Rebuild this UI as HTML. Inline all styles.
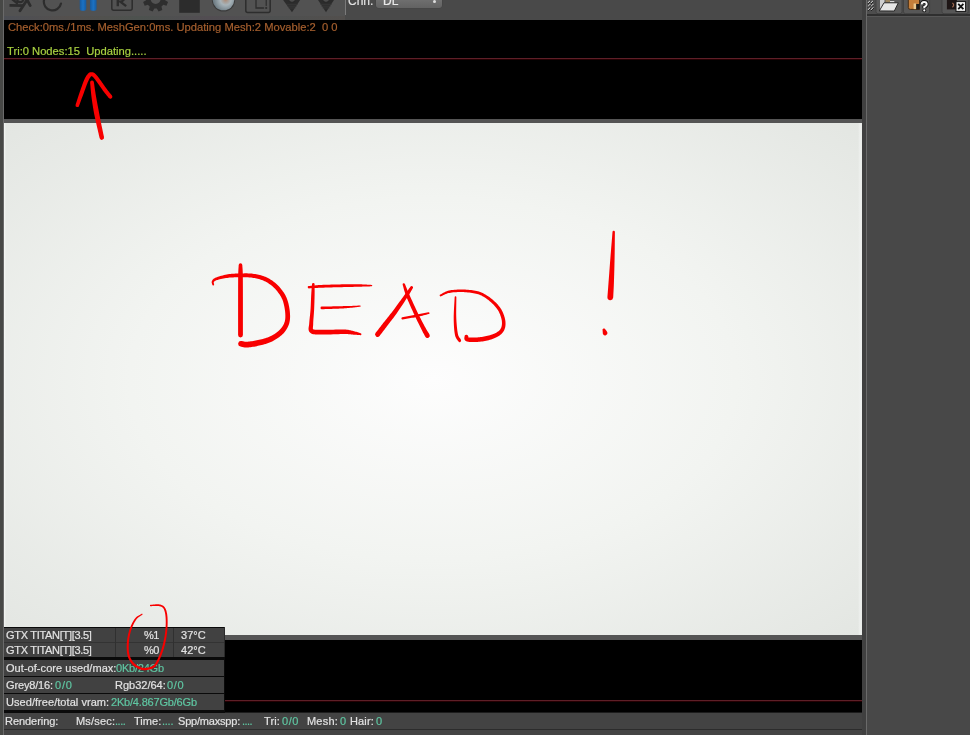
<!DOCTYPE html>
<html><head><meta charset="utf-8">
<style>
html,body{margin:0;padding:0;width:970px;height:735px;overflow:hidden;background:#4b4b4b;}
*{box-sizing:border-box;}
.a{position:absolute;}
body{font-family:"Liberation Sans",sans-serif;font-size:11px;position:relative;}
.t{position:absolute;white-space:pre;line-height:13px;font-family:"Liberation Sans",sans-serif;font-size:11px;will-change:transform;-webkit-text-stroke:0.2px currentColor;}
.g{color:#67cca6;}
</style></head><body>
<!-- left strip -->
<div class="a" style="left:0;top:0;width:4px;height:735px;background:#474846"></div>
<div class="a" style="left:3px;top:0;width:1px;height:735px;background:#6a6a6a"></div>
<!-- top toolbar -->
<div class="a" style="left:4px;top:0;width:858px;height:20px;background:#494949"></div>
<div class="a" style="left:4px;top:0;width:341px;height:20px;background:#525252"></div>
<div class="a" style="left:4px;top:16px;width:341px;height:4px;background:linear-gradient(90deg,#4d4f55,#54504d 20%,#4d524f 40%,#524d52 60%,#4e5050 80%,#524f4d)"></div>

<svg class="a" style="left:0;top:0" width="345" height="20" viewBox="0 0 345 20">
  <g fill="none" stroke="#2d2d2d" stroke-linecap="round">
    <path d="M9.5 5.3 L24 5.6" stroke-width="2.8" stroke-linecap="butt"/>
    <path d="M20 10.8 L27.3 -0.5" stroke-width="2.8"/>
    <path d="M12 -1 L17 3" stroke-width="2.4"/>
    <circle cx="20.2" cy="-1" r="3.2" stroke-width="2.2"/>
    <path d="M27.8 1.2 L30.2 5.6" stroke-width="2.8"/>
    <path d="M44 0 A8.5 8.5 0 0 0 61 3.5" stroke-width="2.2"/>
    <rect x="111.8" y="-4" width="20.4" height="14.2" rx="2" stroke-width="1.5"/>
    <rect x="245.8" y="-4" width="24.4" height="16.4" rx="2" stroke-width="1.5"/>
    <path d="M256 -1 V8 H263.6" stroke-width="1.3"/>
    <path d="M266.2 -1 V5.6" stroke-width="1.2"/>
  </g>
  <defs>
    <linearGradient id="pb" x1="0" x2="1"><stop offset="0" stop-color="#175a9e"/><stop offset=".5" stop-color="#1b72c4"/><stop offset="1" stop-color="#175a9e"/></linearGradient>
    <radialGradient id="sph" cx=".6" cy=".52" r=".55" fx=".6" fy=".5"><stop offset="0" stop-color="#b08670"/><stop offset=".18" stop-color="#a89a90"/><stop offset=".45" stop-color="#a7b3b9"/><stop offset="1" stop-color="#6f7d85"/></radialGradient>
  </defs>
  <rect x="79.7" y="-3" width="6.6" height="13.8" rx="2" fill="url(#pb)"/>
  <rect x="90" y="-3" width="6.6" height="13.8" rx="2" fill="url(#pb)"/>
  <path d="M117.8 -2 V6.2" stroke="#2d2d2d" stroke-width="2.4" fill="none"/><path d="M120.5 1.8 L126.2 6.2" stroke="#2d2d2d" stroke-width="2.3" fill="none"/><path d="M118 1.5 Q124 2 124.5 -2" stroke="#2d2d2d" stroke-width="2" fill="none"/>
  <path d="M165.20 -1.00 L165.12 0.25 L168.05 1.99 L166.51 5.69 L163.22 4.84 L162.39 5.79 L161.44 6.62 L162.29 9.91 L158.59 11.45 L156.85 8.52 L155.60 8.60 L154.35 8.52 L152.61 11.45 L148.91 9.91 L149.76 6.62 L148.81 5.79 L147.98 4.84 L144.69 5.69 L143.15 1.99 L146.08 0.25 L146.00 -1.00 L146.08 -2.25 L143.15 -3.99 L144.69 -7.69 L147.98 -6.84 L148.81 -7.79 L149.76 -8.62 L148.91 -11.91 L152.61 -13.45 L154.35 -10.52 L155.60 -10.60 L156.85 -10.52 L158.59 -13.45 L162.29 -11.91 L161.44 -8.62 L162.39 -7.79 L163.22 -6.84 L166.51 -7.69 L168.05 -3.99 L165.12 -2.25 Z M160.60 -1.00 A5 5 0 1 0 150.60 -1.00 A5 5 0 1 0 160.60 -1.00 Z" fill="#2e2e2e" fill-rule="evenodd"/>
  <rect x="179.2" y="0" width="20.6" height="12.8" fill="#2c2c2c"/>
  <circle cx="223.5" cy="0" r="11.6" fill="#3a3a3a"/><circle cx="266.2" cy="8" r="1.1" fill="#2d2d2d"/>
  <circle cx="223.5" cy="-0.5" r="10.8" fill="url(#sph)"/>
  <path d="M282.4 -1 L292 12.2 L300.8 -1 Z" fill="#2c2c2c"/>
  <circle cx="292" cy="-1.2" r="3.6" fill="#4c4c4c" stroke="#262626" stroke-width="1"/>
  <path d="M286 4.3 H298 M287.2 6.2 H296.8 M288.5 8 H295.5" stroke="#3c3c3c" stroke-width="0.7"/>
  <path d="M317.4 -1 L326 12.2 L334.6 -1 Z" fill="#2c2c2c"/>
  <circle cx="326" cy="-1.2" r="3.6" fill="#4c4c4c" stroke="#262626" stroke-width="1"/>
  <path d="M320 4.3 H332 M321.2 6.2 H330.8 M322.5 8 H329.5" stroke="#3c3c3c" stroke-width="0.7"/>
</svg>
<div class="a" style="left:345px;top:0;width:1px;height:15px;background:#7a7a7a"></div>
<div class="t" style="left:348px;top:-5.5px;color:#e0e0e0;font-size:12px">Chn:</div>
<div class="a" style="left:376px;top:-7px;width:66px;height:14.5px;background:linear-gradient(#7a7a7a,#626262);border-radius:3px;box-shadow:0 0 0 0.6px #444"></div>
<div class="t" style="left:383px;top:-5.5px;color:#e8e8e8;font-size:12px">DL</div>
<div class="a" style="left:433px;top:0px;width:3px;height:3px;background:#ddd;border-radius:50%"></div>

<!-- top black panel -->
<div class="a" style="left:4px;top:20px;width:858px;height:99px;background:#000"></div>
<div class="a" style="left:4px;top:58px;width:858px;height:1px;background:#5e1f28"></div><div class="a" style="left:4px;top:59px;width:858px;height:1px;background:#240002"></div>
<div class="t" style="left:8px;top:21px;color:#a55f2e;font-size:11.2px">Check:0ms./1ms. MeshGen:0ms. Updating Mesh:2 Movable:2  0 0</div>
<div class="t" style="left:7px;top:45px;color:#a8d040;font-size:11.2px">Tri:0 Nodes:15  Updating.....</div>
<!-- gray strip -->
<div class="a" style="left:4px;top:119px;width:858px;height:4px;background:#545454"></div>
<!-- viewport -->
<div class="a" style="left:4px;top:123px;width:858px;height:512px;background:radial-gradient(ellipse at 50% 50%,#fdfdfd 0%,#f2f4f1 50%,#e3e6e2 100%)"></div>
<div class="a" style="left:4px;top:123px;width:2px;height:504px;background:linear-gradient(90deg,rgba(250,252,250,.7),rgba(250,252,250,0))"></div>
<div class="a" style="left:858px;top:123px;width:4px;height:512px;background:linear-gradient(90deg,rgba(240,242,240,0),rgba(240,242,240,.8) 50%,rgba(240,242,240,.4))"></div>
<!-- gray strip bottom -->
<div class="a" style="left:4px;top:635px;width:858px;height:5px;background:#555"></div>
<!-- bottom black panel -->
<div class="a" style="left:4px;top:640px;width:858px;height:72px;background:#000"></div>
<div class="a" style="left:4px;top:700px;width:858px;height:1px;background:#5e1f28"></div><div class="a" style="left:4px;top:701px;width:858px;height:1px;background:#240002"></div>
<!-- status bar -->
<div class="a" style="left:4px;top:712px;width:858px;height:1px;background:#1c1c1c"></div>
<div class="a" style="left:4px;top:713px;width:858px;height:16px;background:#434343"></div>
<div class="a" style="left:4px;top:729px;width:858px;height:1px;background:#2c2c2c"></div>
<div class="a" style="left:4px;top:730px;width:858px;height:5px;background:#444"></div>
<div class="t" style="left:5px;top:715px;color:#e2e2e2;letter-spacing:-0.05px">Rendering:</div>
<div class="t" style="left:75.5px;top:715px;color:#e2e2e2;letter-spacing:0.18px">Ms/sec:</div>
<div class="t" style="left:114.9px;top:715px;color:#5fc6a2;letter-spacing:-0.45px">....</div>
<div class="t" style="left:134.2px;top:715px;color:#e2e2e2;letter-spacing:0.05px">Time:</div>
<div class="t" style="left:162.3px;top:715px;color:#5fc6a2;letter-spacing:-0.25px">....</div>
<div class="t" style="left:177.5px;top:715px;color:#e2e2e2;letter-spacing:-0.2px">Spp/maxspp:</div>
<div class="t" style="left:241.7px;top:715px;color:#5fc6a2;letter-spacing:-0.55px">....</div>
<div class="t" style="left:264.4px;top:715px;color:#e2e2e2;letter-spacing:0.15px">Tri:</div>
<div class="t" style="left:282px;top:715px;color:#5fc6a2;letter-spacing:0.6px">0/0</div>
<div class="t" style="left:306.7px;top:715px;color:#e2e2e2;letter-spacing:0.2px">Mesh:</div>
<div class="t" style="left:339.7px;top:715px;color:#5fc6a2;letter-spacing:0px">0</div>
<div class="t" style="left:350px;top:715px;color:#e2e2e2;letter-spacing:0.15px">Hair:</div>
<div class="t" style="left:375.8px;top:715px;color:#5fc6a2;letter-spacing:0px">0</div>

<!-- gpu table -->
<div class="a" style="left:4px;top:627px;width:221px;height:86px;background:#0a0a0a"></div>
<div class="a" style="left:4px;top:628px;width:220px;height:14px;background:#414141"></div>
<div class="a" style="left:4px;top:642px;width:220px;height:15px;background:#414141;border-top:1px solid #333"></div>
<div class="a" style="left:115px;top:628px;width:1px;height:29px;background:#303030"></div>
<div class="a" style="left:173px;top:628px;width:1px;height:29px;background:#303030"></div>
<div class="a" style="left:224px;top:627px;width:1px;height:30px;background:#2a2a2a"></div>
<div class="a" style="left:4px;top:660px;width:220px;height:16px;background:#414141"></div>
<div class="a" style="left:4px;top:677px;width:220px;height:16px;background:#414141"></div>
<div class="a" style="left:4px;top:694px;width:220px;height:16px;background:#414141"></div>
<div class="t" style="left:5.9px;top:629px;color:#e2e2e2;letter-spacing:-0.3px">GTX TITAN[T][3.5]</div>
<div class="t" style="left:5.9px;top:644px;color:#e2e2e2;letter-spacing:-0.3px">GTX TITAN[T][3.5]</div>
<div class="t" style="left:143.6px;top:629px;color:#e2e2e2;letter-spacing:-0.6px">%1</div>
<div class="t" style="left:143.6px;top:644px;color:#e2e2e2;letter-spacing:-0.6px">%0</div>
<div class="t" style="left:180.7px;top:629px;color:#e2e2e2;letter-spacing:0.05px">37°C</div>
<div class="t" style="left:180.7px;top:644px;color:#e2e2e2;letter-spacing:0.05px">42°C</div>
<div class="t" style="left:5.9px;top:662px;color:#e2e2e2;letter-spacing:0.05px">Out-of-core used/max:</div>
<div class="t" style="left:116.2px;top:662px;color:#5fc6a2;letter-spacing:-0.22px">0Kb/24Gb</div>
<div class="t" style="left:5.9px;top:679px;color:#e2e2e2;letter-spacing:-0.15px">Grey8/16:</div>
<div class="t" style="left:55px;top:679px;color:#5fc6a2;letter-spacing:0.8px">0/0</div>
<div class="t" style="left:114.7px;top:679px;color:#e2e2e2;letter-spacing:0px">Rgb32/64:</div>
<div class="t" style="left:167.2px;top:679px;color:#5fc6a2;letter-spacing:0.7px">0/0</div>
<div class="t" style="left:5.9px;top:696px;color:#e2e2e2;letter-spacing:0.05px">Used/free/total vram:</div>
<div class="t" style="left:111px;top:696px;color:#5fc6a2;letter-spacing:-0.19px">2Kb/4.867Gb/6Gb</div>

<!-- right gutter -->
<div class="a" style="left:862px;top:0;width:4px;height:735px;background:#404040"></div>
<div class="a" style="left:866px;top:0;width:1px;height:735px;background:#6a6a6a"></div>
<!-- right panel -->
<div class="a" style="left:867px;top:0;width:103px;height:735px;background:#484848"></div>
<div class="a" style="left:867px;top:0;width:103px;height:14px;background:#4d4d4d"></div>
<div class="a" style="left:867px;top:14px;width:103px;height:2px;background:#2f2f2f"></div>
<div class="a" style="left:867px;top:16px;width:103px;height:1px;background:#575757"></div>
<svg class="a" style="left:862px;top:0" width="108" height="17" viewBox="862 0 108 17">
  <g stroke="#bdbdbd" stroke-width="1.1">
    <path d="M868 3 L870 1 M868 6.5 L870.5 4 M868 10 L870.5 7.5 M871 3 L873 1 M871 6.5 L873.5 4 M871 10 L873.5 7.5"/>
  </g>
  <g stroke="#222" stroke-width="1">
    <path d="M868 4 L870.5 1.5 M868 7.5 L871 4.5 M868 11 L871 8 M871 4 L873.5 1.5 M871 7.5 L874 4.5 M871 11 L874 8"/>
  </g>
  <path d="M876 -3 H902 V11.5 Q902 13.7 900 13.7 H878 Q876 13.7 876 11.5 Z" fill="#5a5a5a" stroke="#3e3e3e" stroke-width="0.8"/>
  <path d="M903.5 -3 H929.6 V11.5 Q929.6 13.7 927.6 13.7 H905.5 Q903.5 13.7 903.5 11.5 Z" fill="#575757" stroke="#3e3e3e" stroke-width="0.8"/>
  <path d="M942 -3 H968.2 V11.5 Q968.2 13.7 966.2 13.7 H944 Q942 13.7 942 11.5 Z" fill="#575757" stroke="#3e3e3e" stroke-width="0.8"/>
  <!-- folder -->
  <path d="M880 -1 H884.5 V9 H880 Z" fill="#cfcfcf"/>
  <path d="M885.5 -1 H890 V2.4 H885.5 Z" fill="#9a8460"/>
  <path d="M890 1 H894.3 V2.5 H890 Z" fill="#d8d8d8"/>
  <path d="M879.3 10.9 L884 2.8 H898.3 L894.3 11 Z" fill="#e6e6e6" stroke="#1e1e1e" stroke-width="0.9"/>
  <!-- orange -->
  <path d="M908.3 -1 H919.5 V9.4 H910.3 Q908.3 9.4 908.3 7.4 Z" fill="#c47e3a" stroke="#3a2410" stroke-width="0.9"/>
  <rect x="913.6" y="3.5" width="2.4" height="5.6" fill="#e8c890"/>
  <rect x="916.2" y="4" width="3.3" height="5.4" fill="#1a1a1a"/>
  <path d="M921.6 4.4 Q921.6 1.9 924.1 1.9 Q926.7 1.9 926.7 4.3 Q926.7 6 924.3 7 V8.2" fill="none" stroke="#111" stroke-width="3.8"/><circle cx="924.3" cy="10.4" r="1.9" fill="#111"/>
  <path d="M921.6 4.4 Q921.6 1.9 924.1 1.9 Q926.7 1.9 926.7 4.3 Q926.7 6 924.3 7 V8.2" fill="none" stroke="#f4f4f4" stroke-width="2"/><circle cx="924.3" cy="10.4" r="1.1" fill="#f4f4f4"/>
  <!-- dark -->
  <rect x="946.9" y="-1" width="10" height="10.4" fill="#1e1616"/>
  <path d="M952.4 3 Q955 5 952.4 7.2" stroke="#a06a50" stroke-width="1.2" fill="none"/>
  <rect x="956" y="1.6" width="9.6" height="9.8" fill="#f2f2f2" stroke="#151515" stroke-width="1"/>
  <path d="M958.2 3.8 L963.4 9.2 M963.4 3.8 L958.2 9.2" stroke="#111" stroke-width="1.8"/>
</svg>

<!-- annotations -->
<svg class="a" style="left:0;top:0" width="970" height="735" viewBox="0 0 970 735"><g fill="#f80000">
  <path d="M79.00 105.89L79.45 104.67L79.91 103.45L80.36 102.23L80.81 101.01L81.26 99.79L81.71 98.57L82.17 97.36L82.62 96.14L83.07 94.92L83.53 93.69L84.00 92.43L84.48 91.11L84.96 89.77L85.45 88.42L85.94 87.08L86.41 85.79L86.88 84.55L87.32 83.40L87.74 82.35L88.12 81.44L88.48 80.64L88.82 79.93L89.14 79.31L89.43 78.76L89.71 78.28L89.97 77.86L90.22 77.48L90.47 77.15L90.70 76.84L90.93 76.56L91.11 76.36L91.23 76.24L91.30 76.18L91.31 76.17L91.29 76.17L91.25 76.18L91.24 76.17L91.29 76.17L91.40 76.17L91.57 76.19L91.73 76.21L91.86 76.23L91.95 76.25L92.04 76.28L92.13 76.33L92.26 76.40L92.42 76.52L92.62 76.68L92.87 76.90L93.16 77.19L93.49 77.54L93.85 77.96L94.24 78.45L94.66 78.99L95.11 79.58L95.57 80.21L96.06 80.88L96.55 81.56L97.07 82.27L97.58 82.98L98.11 83.70L98.65 84.47L99.22 85.29L99.81 86.13L100.41 86.99L101.01 87.86L101.62 88.72L102.22 89.58L102.81 90.40L103.40 91.20L103.97 91.95L104.53 92.68L105.08 93.38L105.63 94.07L106.17 94.74L106.71 95.41L107.24 96.06L107.77 96.72L108.30 97.38L108.84 98.05A2.00 2.00 0 0 0 111.96 95.55L111.42 94.87L110.88 94.20L110.35 93.54L109.81 92.89L109.28 92.23L108.75 91.57L108.22 90.90L107.68 90.22L107.15 89.52L106.60 88.80L106.05 88.05L105.47 87.25L104.89 86.42L104.29 85.57L103.69 84.71L103.10 83.85L102.50 83.00L101.92 82.17L101.36 81.37L100.82 80.62L100.30 79.92L99.79 79.22L99.29 78.52L98.80 77.85L98.32 77.19L97.84 76.56L97.38 75.97L96.92 75.40L96.48 74.88L96.04 74.41L95.62 74.00L95.21 73.63L94.81 73.31L94.40 73.03L93.99 72.80L93.57 72.60L93.16 72.45L92.76 72.34L92.38 72.26L92.03 72.21L91.70 72.18L91.33 72.16L90.91 72.17L90.45 72.23L89.96 72.35L89.48 72.55L89.03 72.81L88.61 73.11L88.23 73.46L87.87 73.84L87.53 74.22L87.20 74.63L86.86 75.07L86.52 75.56L86.16 76.10L85.81 76.69L85.44 77.35L85.06 78.07L84.68 78.87L84.28 79.76L83.85 80.76L83.41 81.87L82.95 83.07L82.48 84.33L82.00 85.66L81.52 87.01L81.04 88.37L80.57 89.72L80.11 91.04L79.67 92.31L79.24 93.55L78.82 94.80L78.41 96.04L78.00 97.28L77.60 98.52L77.20 99.76L76.80 101.00L76.40 102.23L76.00 103.47L75.60 104.71A1.80 1.80 0 0 0 79.00 105.89Z"/>
  <path d="M90.11 82.73L90.23 84.03L90.35 85.33L90.46 86.62L90.57 87.91L90.68 89.21L90.80 90.52L90.93 91.84L91.06 93.18L91.21 94.54L91.37 95.92L91.55 97.34L91.74 98.79L91.95 100.27L92.16 101.77L92.38 103.27L92.61 104.76L92.84 106.24L93.07 107.68L93.31 109.09L93.54 110.45L93.77 111.74L94.00 112.96L94.24 114.14L94.47 115.28L94.71 116.42L94.96 117.55L95.21 118.71L95.48 119.90L95.76 121.16L96.05 122.50L96.36 123.91L96.70 125.39L97.04 126.92L97.40 128.48L97.76 130.07L98.13 131.68L98.51 133.30L98.88 134.91L99.24 136.51L99.60 138.08A2.25 2.25 0 0 0 104.00 137.12L103.67 135.54L103.33 133.93L102.99 132.31L102.65 130.69L102.31 129.08L101.98 127.48L101.65 125.91L101.34 124.39L101.03 122.92L100.75 121.50L100.48 120.17L100.23 118.91L100.00 117.71L99.78 116.56L99.56 115.43L99.35 114.32L99.14 113.19L98.92 112.03L98.70 110.82L98.46 109.55L98.21 108.21L97.94 106.82L97.67 105.39L97.40 103.94L97.12 102.47L96.84 101.00L96.57 99.53L96.31 98.08L96.06 96.66L95.83 95.28L95.61 93.94L95.40 92.61L95.20 91.31L95.00 90.02L94.82 88.73L94.63 87.45L94.45 86.16L94.27 84.87L94.08 83.58L93.89 82.27A1.90 1.90 0 0 0 90.11 82.73Z"/>
  <path d="M238.70 265.00L238.65 265.93L238.59 266.76L238.54 267.53L238.48 268.28L238.43 269.06L238.37 269.92L238.32 270.90L238.27 272.04L238.23 273.39L238.20 275.00L238.17 276.85L238.15 278.88L238.14 281.08L238.13 283.44L238.12 285.94L238.11 288.56L238.11 291.29L238.11 294.12L238.10 297.03L238.10 300.00L238.10 303.10L238.09 306.36L238.09 309.76L238.09 313.28L238.09 316.88L238.10 320.52L238.10 324.19L238.10 327.84L238.10 331.46L238.10 335.00A2.40 2.40 0 0 0 242.90 335.00L242.90 331.46L242.90 327.84L242.90 324.19L242.90 320.52L242.91 316.88L242.91 313.28L242.91 309.76L242.91 306.36L242.90 303.10L242.90 300.00L242.90 297.03L242.89 294.12L242.89 291.29L242.89 288.56L242.88 285.94L242.87 283.44L242.86 281.08L242.85 278.88L242.83 276.85L242.80 275.00L242.77 273.39L242.73 272.04L242.68 270.90L242.63 269.92L242.57 269.06L242.52 268.28L242.46 267.53L242.41 266.76L242.35 265.93L242.30 265.00A1.80 1.80 0 0 0 238.70 265.00Z"/>
  <path d="M214.09 284.46L214.05 284.11L213.99 283.74L213.91 283.39L213.83 283.07L213.77 282.79L213.74 282.55L213.73 282.35L213.76 282.21L213.80 282.12L213.88 282.00L214.03 281.80L214.20 281.58L214.36 281.40L214.54 281.23L214.75 281.08L215.02 280.91L215.36 280.73L215.78 280.54L216.32 280.34L216.98 280.12L217.78 279.88L218.74 279.62L219.81 279.35L220.97 279.08L222.20 278.81L223.47 278.55L224.75 278.30L226.03 278.08L227.27 277.89L228.45 277.73L229.59 277.61L230.75 277.51L231.92 277.44L233.11 277.39L234.30 277.35L235.49 277.33L236.68 277.32L237.87 277.31L239.06 277.31L240.23 277.30L241.39 277.29L242.53 277.28L243.65 277.27L244.76 277.26L245.85 277.27L246.93 277.29L248.00 277.32L249.06 277.38L250.11 277.47L251.18 277.59L252.26 277.73L253.36 277.90L254.46 278.08L255.56 278.28L256.65 278.51L257.73 278.75L258.79 279.02L259.82 279.32L260.82 279.63L261.79 279.98L262.73 280.35L263.66 280.74L264.58 281.17L265.47 281.62L266.36 282.09L267.22 282.59L268.07 283.11L268.90 283.65L269.71 284.20L270.50 284.78L271.27 285.36L272.02 285.97L272.76 286.60L273.47 287.25L274.17 287.93L274.86 288.62L275.53 289.33L276.18 290.06L276.81 290.82L277.44 291.60L278.06 292.40L278.66 293.22L279.25 294.04L279.82 294.87L280.36 295.72L280.88 296.59L281.37 297.48L281.83 298.40L282.26 299.34L282.65 300.32L283.02 301.36L283.36 302.48L283.69 303.66L283.99 304.89L284.26 306.14L284.51 307.40L284.72 308.66L284.90 309.89L285.05 311.08L285.16 312.22L285.25 313.32L285.31 314.41L285.35 315.46L285.36 316.48L285.33 317.48L285.27 318.44L285.17 319.38L285.03 320.28L284.84 321.16L284.60 322.02L284.31 322.87L283.98 323.71L283.61 324.53L283.20 325.32L282.75 326.10L282.25 326.87L281.71 327.62L281.12 328.36L280.47 329.09L279.78 329.82L279.01 330.54L278.17 331.28L277.25 332.01L276.27 332.74L275.25 333.46L274.18 334.16L273.10 334.82L272.00 335.45L270.90 336.04L269.83 336.57L268.76 337.04L267.65 337.47L266.49 337.87L265.31 338.23L264.10 338.57L262.87 338.89L261.63 339.19L260.39 339.48L259.16 339.75L257.96 340.02L256.78 340.28L255.59 340.52L254.39 340.74L253.19 340.95L252.01 341.13L250.87 341.30L249.77 341.44L248.74 341.55L247.79 341.64L246.95 341.70L246.26 341.73L245.69 341.72L245.19 341.69L244.73 341.63L244.28 341.56L243.82 341.47L243.30 341.36L242.73 341.24L242.08 341.12L241.43 341.03A2.80 2.80 0 0 0 240.57 346.57L241.09 346.66L241.54 346.76L242.02 346.88L242.55 347.02L243.14 347.16L243.81 347.30L244.56 347.41L245.38 347.49L246.28 347.52L247.25 347.50L248.27 347.43L249.34 347.32L250.48 347.19L251.67 347.03L252.90 346.84L254.16 346.63L255.44 346.40L256.72 346.14L257.99 345.87L259.24 345.58L260.46 345.28L261.71 344.97L262.99 344.65L264.29 344.30L265.61 343.93L266.94 343.52L268.27 343.07L269.59 342.57L270.90 342.03L272.17 341.43L273.41 340.79L274.64 340.10L275.86 339.36L277.06 338.58L278.24 337.77L279.38 336.94L280.48 336.07L281.53 335.19L282.51 334.29L283.42 333.38L284.26 332.46L285.03 331.53L285.75 330.58L286.40 329.60L287.00 328.61L287.55 327.60L288.03 326.57L288.47 325.53L288.86 324.47L289.20 323.38L289.49 322.26L289.72 321.12L289.89 319.98L290.00 318.83L290.07 317.67L290.09 316.51L290.07 315.34L290.02 314.16L289.94 312.98L289.84 311.78L289.71 310.54L289.54 309.24L289.33 307.91L289.09 306.55L288.81 305.19L288.51 303.82L288.17 302.48L287.79 301.17L287.39 299.90L286.95 298.68L286.47 297.52L285.96 296.41L285.41 295.34L284.83 294.30L284.22 293.31L283.60 292.36L282.95 291.43L282.30 290.53L281.64 289.66L280.96 288.80L280.27 287.95L279.55 287.12L278.82 286.30L278.06 285.51L277.29 284.74L276.49 283.99L275.68 283.26L274.84 282.56L273.98 281.88L273.10 281.22L272.20 280.60L271.28 279.99L270.35 279.41L269.39 278.84L268.41 278.31L267.41 277.80L266.39 277.31L265.35 276.85L264.29 276.42L263.21 276.02L262.11 275.66L260.98 275.32L259.83 275.02L258.66 274.74L257.49 274.49L256.31 274.27L255.13 274.07L253.95 273.90L252.79 273.75L251.62 273.61L250.46 273.50L249.30 273.43L248.15 273.38L247.00 273.36L245.86 273.36L244.73 273.37L243.59 273.40L242.45 273.43L241.31 273.47L240.17 273.50L239.00 273.53L237.82 273.56L236.62 273.59L235.40 273.62L234.17 273.67L232.93 273.74L231.68 273.83L230.43 273.94L229.19 274.09L227.95 274.27L226.69 274.49L225.39 274.76L224.07 275.06L222.75 275.38L221.45 275.73L220.19 276.09L219.00 276.45L217.90 276.80L216.90 277.15L216.02 277.48L215.27 277.81L214.61 278.14L214.05 278.48L213.56 278.83L213.15 279.19L212.80 279.56L212.51 279.93L212.29 280.29L212.10 280.63L211.92 281.00L211.75 281.47L211.66 281.98L211.67 282.45L211.74 282.88L211.84 283.26L211.96 283.61L212.07 283.93L212.17 284.21L212.25 284.46L212.31 284.74A0.90 0.90 0 0 0 214.09 284.46Z"/>
  <path d="M308.99 288.40L310.07 288.34L311.08 288.28L312.06 288.22L313.03 288.16L314.01 288.10L315.04 288.04L316.12 287.98L317.31 287.92L318.61 287.86L320.06 287.80L321.68 287.74L323.45 287.68L325.34 287.62L327.32 287.55L329.37 287.49L331.47 287.43L333.59 287.37L335.71 287.31L337.80 287.26L339.83 287.20L341.87 287.15L343.98 287.09L346.13 287.04L348.29 286.99L350.43 286.94L352.54 286.89L354.57 286.84L356.52 286.79L358.34 286.75L360.01 286.70L361.51 286.66L362.87 286.61L364.10 286.57L365.25 286.53L366.32 286.49L367.36 286.46L368.38 286.42L369.41 286.38L370.47 286.34L371.59 286.30A0.70 0.70 0 0 0 371.61 284.90L370.49 284.84L369.43 284.77L368.40 284.70L367.39 284.63L366.35 284.56L365.27 284.49L364.12 284.43L362.87 284.38L361.51 284.33L359.99 284.30L358.32 284.28L356.49 284.27L354.54 284.26L352.50 284.27L350.39 284.28L348.24 284.29L346.08 284.31L343.93 284.34L341.81 284.37L339.77 284.40L337.73 284.44L335.64 284.48L333.52 284.53L331.39 284.59L329.29 284.64L327.23 284.71L325.24 284.78L323.34 284.85L321.57 284.92L319.94 285.00L318.46 285.09L317.14 285.18L315.94 285.27L314.83 285.38L313.80 285.48L312.81 285.59L311.85 285.69L310.88 285.80L309.88 285.90L308.81 286.00A1.20 1.20 0 0 0 308.99 288.40Z"/>
  <path d="M312.00 284.15L311.92 285.21L311.84 286.24L311.76 287.26L311.68 288.26L311.59 289.28L311.51 290.32L311.43 291.39L311.35 292.51L311.28 293.69L311.20 294.94L311.13 296.27L311.06 297.69L311.00 299.18L310.94 300.70L310.88 302.26L310.82 303.83L310.75 305.40L310.68 306.94L310.60 308.44L310.50 309.89L310.39 311.31L310.26 312.76L310.11 314.21L309.96 315.66L309.80 317.10L309.65 318.50L309.51 319.86L309.38 321.16L309.27 322.39L309.20 323.50L309.12 324.45L309.00 325.33L308.85 326.20L308.70 327.06L308.58 327.93L308.52 328.85L308.59 329.84L308.87 330.89L309.44 331.93L310.26 332.79L311.21 333.43L312.21 333.88L313.24 334.17L314.30 334.35L315.40 334.46L316.55 334.52L317.78 334.55L319.10 334.56L320.51 334.57L322.07 334.60L323.90 334.61L326.02 334.59L328.35 334.54L330.80 334.46L333.32 334.37L335.82 334.28L338.24 334.19L340.49 334.12L342.49 334.07L344.16 334.05L345.54 334.06L346.69 334.08L347.66 334.12L348.48 334.17L349.20 334.23L349.86 334.29L350.51 334.36L351.19 334.44L351.92 334.51L352.72 334.58L353.53 334.64L354.30 334.69L355.06 334.75L355.81 334.81L356.56 334.87L357.30 334.93L358.04 334.99L358.79 335.06L359.55 335.12L360.31 335.18A1.00 1.00 0 0 0 360.69 333.22L359.96 333.00L359.25 332.77L358.54 332.54L357.82 332.31L357.11 332.08L356.38 331.85L355.63 331.63L354.87 331.42L354.08 331.21L353.28 331.02L352.54 330.84L351.88 330.67L351.24 330.49L350.56 330.31L349.82 330.15L349.00 329.99L348.06 329.85L346.97 329.72L345.71 329.62L344.24 329.55L342.47 329.51L340.40 329.51L338.12 329.54L335.69 329.59L333.18 329.65L330.67 329.72L328.23 329.77L325.95 329.81L323.90 329.82L322.13 329.80L320.57 329.77L319.13 329.76L317.84 329.76L316.69 329.75L315.70 329.71L314.87 329.65L314.21 329.56L313.71 329.45L313.37 329.33L313.14 329.21L313.05 329.15L313.01 329.14L312.96 329.02L312.90 328.72L312.88 328.22L312.92 327.55L312.99 326.75L313.08 325.82L313.16 324.78L313.20 323.70L313.22 322.61L313.27 321.44L313.35 320.18L313.45 318.85L313.56 317.45L313.68 316.02L313.80 314.55L313.91 313.06L314.01 311.58L314.10 310.11L314.17 308.63L314.23 307.10L314.29 305.54L314.35 303.97L314.41 302.39L314.45 300.83L314.50 299.29L314.54 297.81L314.57 296.40L314.60 295.06L314.62 293.81L314.63 292.63L314.64 291.51L314.63 290.44L314.63 289.39L314.62 288.37L314.61 287.36L314.61 286.34L314.60 285.31L314.60 284.25A1.30 1.30 0 0 0 312.00 284.15Z"/>
  <path d="M321.84 309.20L323.67 309.14L325.56 309.08L327.48 309.02L329.41 308.97L331.32 308.91L333.20 308.85L335.01 308.79L336.74 308.73L338.36 308.67L339.84 308.60L341.18 308.53L342.39 308.47L343.49 308.40L344.50 308.33L345.45 308.26L346.36 308.18L347.25 308.11L348.15 308.03L349.08 307.94L350.06 307.85L351.08 307.75L352.09 307.64L353.10 307.53L354.11 307.42L355.12 307.30L356.13 307.18L357.13 307.06L358.14 306.93L359.14 306.81L360.15 306.70A0.60 0.60 0 0 0 360.05 305.50L359.04 305.55L358.03 305.60L357.01 305.64L356.00 305.69L354.99 305.74L353.98 305.79L352.97 305.83L351.96 305.88L350.95 305.92L349.94 305.95L348.96 305.98L348.03 306.01L347.13 306.04L346.24 306.06L345.34 306.08L344.39 306.10L343.39 306.12L342.29 306.14L341.09 306.17L339.76 306.20L338.28 306.23L336.66 306.27L334.94 306.31L333.13 306.35L331.25 306.39L329.34 306.43L327.41 306.48L325.49 306.52L323.60 306.56L321.76 306.60A1.30 1.30 0 0 0 321.84 309.20Z"/>
  <path d="M379.58 335.93L380.41 334.84L381.24 333.75L382.07 332.68L382.90 331.60L383.73 330.52L384.56 329.43L385.40 328.34L386.24 327.24L387.09 326.12L387.94 325.00L388.80 323.87L389.65 322.74L390.52 321.61L391.39 320.47L392.27 319.32L393.16 318.14L394.05 316.94L394.96 315.71L395.88 314.44L396.82 313.13L397.78 311.75L398.78 310.31L399.80 308.81L400.83 307.28L401.87 305.74L402.89 304.20L403.88 302.70L404.83 301.25L405.73 299.86L406.57 298.57L407.34 297.37L408.05 296.23L408.71 295.16L409.33 294.14L409.92 293.15L410.49 292.19L411.06 291.23L411.63 290.27L412.21 289.30L412.81 288.30A1.45 1.45 0 0 0 410.39 286.70L409.70 287.66L409.04 288.59L408.40 289.50L407.75 290.40L407.10 291.31L406.44 292.24L405.75 293.21L405.03 294.22L404.26 295.28L403.43 296.43L402.53 297.67L401.57 299.01L400.56 300.41L399.51 301.87L398.43 303.35L397.35 304.84L396.27 306.32L395.21 307.77L394.17 309.16L393.18 310.47L392.23 311.72L391.29 312.93L390.36 314.11L389.44 315.27L388.53 316.41L387.63 317.53L386.73 318.65L385.84 319.76L384.95 320.88L384.06 322.00L383.19 323.12L382.33 324.22L381.47 325.32L380.63 326.40L379.79 327.48L378.96 328.56L378.13 329.64L377.30 330.71L376.46 331.79L375.62 332.87A2.50 2.50 0 0 0 379.58 335.93Z"/>
  <path d="M402.67 284.80L402.97 285.84L403.24 286.82L403.50 287.78L403.75 288.73L404.01 289.71L404.30 290.73L404.63 291.82L405.01 292.99L405.46 294.27L405.98 295.67L406.60 297.22L407.29 298.91L408.05 300.71L408.86 302.59L409.70 304.53L410.57 306.49L411.44 308.44L412.30 310.35L413.14 312.19L413.94 313.93L414.72 315.62L415.52 317.32L416.33 319.01L417.13 320.67L417.92 322.30L418.69 323.86L419.44 325.36L420.14 326.78L420.79 328.09L421.39 329.29L421.93 330.37L422.41 331.31L422.85 332.15L423.24 332.90L423.60 333.58L423.95 334.22L424.28 334.83L424.61 335.45L424.95 336.09L425.31 336.78A2.40 2.40 0 0 0 429.49 334.42L429.07 333.73L428.67 333.08L428.28 332.48L427.91 331.90L427.53 331.30L427.14 330.68L426.73 329.99L426.27 329.22L425.77 328.33L425.21 327.31L424.57 326.13L423.89 324.85L423.15 323.46L422.38 321.99L421.58 320.45L420.76 318.86L419.93 317.23L419.10 315.58L418.27 313.92L417.46 312.27L416.64 310.56L415.78 308.74L414.90 306.86L414.01 304.93L413.12 303.00L412.25 301.09L411.41 299.23L410.62 297.47L409.88 295.82L409.22 294.33L408.63 293.00L408.12 291.81L407.66 290.72L407.24 289.71L406.85 288.75L406.48 287.83L406.11 286.91L405.74 285.98L405.35 285.02L404.93 284.00A1.20 1.20 0 0 0 402.67 284.80Z"/>
  <path d="M402.59 319.38L403.92 319.16L405.25 318.95L406.59 318.74L407.92 318.53L409.26 318.31L410.60 318.09L411.94 317.87L413.27 317.64L414.60 317.39L415.92 317.13L417.24 316.85L418.54 316.56L419.84 316.26L421.13 315.94L422.42 315.63L423.70 315.30L424.97 314.98L426.25 314.66L427.53 314.34L428.81 314.03A0.95 0.95 0 0 0 428.39 312.17L427.09 312.45L425.80 312.72L424.51 313.00L423.22 313.27L421.93 313.55L420.65 313.82L419.36 314.09L418.07 314.36L416.77 314.62L415.48 314.87L414.17 315.12L412.86 315.36L411.54 315.60L410.22 315.83L408.89 316.06L407.55 316.29L406.22 316.52L404.88 316.75L403.55 316.98L402.21 317.22A1.10 1.10 0 0 0 402.59 319.38Z"/>
  <path d="M454.65 297.18L454.55 299.28L454.43 301.42L454.30 303.58L454.17 305.75L454.04 307.91L453.93 310.05L453.83 312.15L453.76 314.21L453.71 316.21L453.70 318.13L453.72 320.00L453.76 321.86L453.83 323.70L453.91 325.49L454.02 327.23L454.15 328.90L454.30 330.49L454.47 331.98L454.66 333.36L454.88 334.62L455.14 335.75L455.45 336.73L455.81 337.58L456.19 338.31L456.59 338.94L456.97 339.48L457.33 339.95L457.65 340.38L457.95 340.82L458.25 341.36A1.55 1.55 0 0 0 460.95 339.84L460.60 339.21L460.21 338.61L459.84 338.10L459.50 337.63L459.19 337.20L458.91 336.75L458.65 336.25L458.40 335.66L458.15 334.91L457.92 333.98L457.69 332.85L457.48 331.56L457.28 330.14L457.09 328.61L456.92 326.99L456.76 325.29L456.62 323.54L456.49 321.74L456.39 319.91L456.30 318.07L456.24 316.19L456.20 314.23L456.19 312.20L456.20 310.11L456.22 307.98L456.25 305.82L456.28 303.65L456.31 301.49L456.34 299.34L456.35 297.22A0.85 0.85 0 0 0 454.65 297.18Z"/>
  <path d="M440.99 296.27L441.86 295.90L442.71 295.51L443.52 295.11L444.30 294.72L445.09 294.34L445.88 293.99L446.70 293.66L447.57 293.36L448.51 293.10L449.54 292.88L450.70 292.69L451.96 292.52L453.32 292.37L454.73 292.26L456.20 292.16L457.69 292.10L459.19 292.06L460.68 292.04L462.14 292.06L463.56 292.10L464.96 292.17L466.40 292.27L467.85 292.40L469.30 292.55L470.74 292.74L472.15 292.94L473.51 293.17L474.81 293.41L476.03 293.68L477.15 293.96L478.16 294.25L479.09 294.55L479.94 294.88L480.73 295.22L481.48 295.59L482.21 295.97L482.93 296.39L483.67 296.84L484.43 297.32L485.22 297.82L486.02 298.35L486.82 298.91L487.62 299.49L488.42 300.10L489.21 300.73L489.99 301.38L490.75 302.05L491.49 302.72L492.21 303.41L492.91 304.10L493.59 304.80L494.26 305.51L494.91 306.23L495.54 306.95L496.15 307.68L496.73 308.42L497.28 309.18L497.80 309.96L498.29 310.75L498.75 311.58L499.18 312.46L499.61 313.39L500.02 314.37L500.40 315.38L500.76 316.40L501.07 317.42L501.35 318.43L501.57 319.40L501.75 320.33L501.86 321.21L501.93 322.06L501.96 322.90L501.95 323.73L501.90 324.53L501.81 325.30L501.67 326.03L501.50 326.74L501.28 327.40L501.02 328.02L500.72 328.61L500.38 329.16L499.99 329.69L499.55 330.19L499.06 330.68L498.53 331.15L497.94 331.61L497.29 332.06L496.59 332.49L495.84 332.92L495.04 333.33L494.18 333.73L493.23 334.11L492.19 334.49L491.08 334.85L489.93 335.20L488.75 335.53L487.55 335.83L486.36 336.11L485.19 336.37L484.07 336.59L482.96 336.79L481.82 336.95L480.66 337.09L479.47 337.21L478.30 337.30L477.14 337.38L476.02 337.44L474.96 337.49L473.96 337.52L473.05 337.55L472.23 337.57L471.47 337.58L470.77 337.57L470.14 337.55L469.57 337.52L469.08 337.47L468.66 337.42L468.32 337.36L468.08 337.30L467.97 337.28L468.08 337.38L468.29 337.64L468.40 337.92L468.41 338.08L468.39 338.07L468.38 337.91L468.38 337.63L468.38 337.25L468.36 336.76L468.28 336.35A1.90 1.90 0 0 0 464.52 336.85L464.51 336.98L464.48 337.06L464.44 337.25L464.38 337.56L464.32 337.98L464.32 338.53L464.43 339.21L464.77 339.98L465.36 340.66L466.03 341.12L466.65 341.39L467.24 341.59L467.86 341.73L468.50 341.85L469.18 341.93L469.89 341.99L470.64 342.03L471.43 342.05L472.27 342.06L473.15 342.05L474.09 342.03L475.12 342.00L476.23 341.96L477.41 341.90L478.63 341.82L479.88 341.72L481.16 341.59L482.43 341.43L483.70 341.24L484.93 341.01L486.15 340.74L487.39 340.45L488.65 340.13L489.93 339.77L491.19 339.39L492.44 338.98L493.66 338.54L494.82 338.08L495.93 337.59L496.96 337.07L497.90 336.54L498.78 335.99L499.62 335.41L500.42 334.80L501.16 334.16L501.86 333.48L502.50 332.77L503.08 332.02L503.61 331.23L504.08 330.39L504.48 329.52L504.81 328.61L505.08 327.68L505.28 326.73L505.42 325.77L505.50 324.79L505.53 323.80L505.51 322.80L505.45 321.80L505.34 320.79L505.17 319.74L504.95 318.66L504.67 317.55L504.34 316.43L503.97 315.31L503.56 314.20L503.12 313.10L502.66 312.03L502.17 311.00L501.65 310.02L501.11 309.08L500.53 308.17L499.92 307.30L499.28 306.46L498.62 305.65L497.94 304.86L497.25 304.10L496.54 303.35L495.82 302.62L495.09 301.90L494.34 301.18L493.55 300.46L492.75 299.76L491.92 299.07L491.08 298.39L490.23 297.74L489.37 297.11L488.50 296.50L487.64 295.92L486.78 295.38L485.96 294.87L485.17 294.38L484.38 293.92L483.58 293.47L482.76 293.04L481.90 292.63L480.99 292.25L480.02 291.89L478.98 291.55L477.85 291.24L476.63 290.96L475.34 290.70L473.97 290.46L472.55 290.24L471.08 290.05L469.59 289.89L468.09 289.75L466.59 289.63L465.10 289.55L463.64 289.50L462.18 289.48L460.67 289.48L459.13 289.51L457.59 289.57L456.05 289.65L454.54 289.76L453.06 289.90L451.65 290.08L450.31 290.28L449.06 290.52L447.90 290.82L446.83 291.16L445.85 291.55L444.95 291.97L444.11 292.41L443.32 292.85L442.55 293.29L441.79 293.72L441.03 294.14L440.21 294.53A0.95 0.95 0 0 0 440.99 296.27Z"/>
  <path d="M612.50 231.94L612.29 234.55L612.08 237.15L611.87 239.76L611.65 242.38L611.44 244.99L611.23 247.59L611.02 250.19L610.81 252.77L610.60 255.34L610.40 257.90L610.20 260.48L610.00 263.12L609.79 265.79L609.59 268.46L609.39 271.10L609.20 273.68L609.01 276.17L608.83 278.55L608.66 280.79L608.50 282.85L608.36 284.71L608.23 286.39L608.12 287.93L608.01 289.35L607.91 290.68L607.81 291.96L607.71 293.23L607.61 294.50L607.51 295.82L607.41 297.22A2.90 2.90 0 0 0 613.19 297.58L613.26 296.19L613.33 294.88L613.40 293.60L613.47 292.33L613.54 291.05L613.61 289.70L613.68 288.27L613.76 286.72L613.83 285.03L613.90 283.15L613.97 281.08L614.04 278.84L614.12 276.45L614.20 273.94L614.27 271.35L614.35 268.70L614.42 266.02L614.48 263.35L614.54 260.70L614.60 258.10L614.64 255.54L614.68 252.96L614.72 250.36L614.75 247.75L614.77 245.14L614.80 242.52L614.82 239.90L614.84 237.28L614.87 234.66L614.90 232.06A1.20 1.20 0 0 0 612.50 231.94Z"/>
  <path d="M602.59 330.52L602.62 330.85L602.64 331.18L602.67 331.51L602.69 331.84L602.72 332.17L602.74 332.50L602.77 332.83L602.80 333.16L602.82 333.50L602.85 333.83A2.40 2.40 0 0 0 607.35 332.17L607.16 331.90L606.96 331.64L606.77 331.37L606.58 331.10L606.38 330.83L606.19 330.56L605.99 330.29L605.80 330.02L605.60 329.75L605.41 329.48A1.50 1.50 0 0 0 602.59 330.52Z"/>
  <path d="M141.68 613.75L141.04 614.17L140.40 614.55L139.74 614.91L139.07 615.27L138.40 615.65L137.71 616.07L137.02 616.54L136.34 617.10L135.67 617.74L135.03 618.48L134.41 619.31L133.80 620.22L133.20 621.19L132.62 622.22L132.05 623.30L131.50 624.42L130.98 625.57L130.49 626.74L130.03 627.92L129.60 629.09L129.21 630.29L128.84 631.52L128.49 632.78L128.18 634.06L127.89 635.36L127.63 636.68L127.40 638.00L127.20 639.31L127.03 640.62L126.90 641.92L126.80 643.22L126.73 644.55L126.69 645.90L126.68 647.25L126.70 648.60L126.76 649.92L126.85 651.22L126.98 652.48L127.16 653.69L127.38 654.83L127.64 655.91L127.95 656.93L128.30 657.92L128.69 658.86L129.12 659.76L129.59 660.61L130.08 661.44L130.62 662.22L131.17 662.98L131.76 663.72L132.41 664.43L133.10 665.13L133.84 665.79L134.61 666.42L135.41 667.01L136.22 667.56L137.04 668.06L137.86 668.52L138.68 668.92L139.48 669.27L140.27 669.56L141.08 669.79L141.87 669.97L142.67 670.09L143.47 670.17L144.26 670.20L145.05 670.18L145.83 670.13L146.61 670.05L147.38 669.94L148.15 669.80L148.94 669.65L149.75 669.46L150.57 669.24L151.41 668.97L152.23 668.64L153.05 668.25L153.86 667.78L154.63 667.23L155.36 666.59L156.04 665.87L156.67 665.08L157.26 664.22L157.82 663.32L158.35 662.36L158.86 661.36L159.35 660.33L159.83 659.28L160.30 658.20L160.77 657.11L161.23 655.99L161.70 654.82L162.16 653.61L162.61 652.36L163.05 651.08L163.47 649.77L163.88 648.44L164.26 647.08L164.63 645.72L164.97 644.34L165.29 642.93L165.60 641.48L165.89 640.00L166.17 638.49L166.42 636.97L166.65 635.44L166.87 633.92L167.05 632.42L167.21 630.93L167.35 629.48L167.45 628.03L167.54 626.57L167.60 625.09L167.64 623.63L167.65 622.18L167.64 620.77L167.60 619.40L167.54 618.09L167.46 616.85L167.34 615.70L167.21 614.62L167.05 613.60L166.86 612.63L166.65 611.71L166.42 610.85L166.15 610.04L165.85 609.27L165.51 608.56L165.14 607.89L164.73 607.27L164.28 606.71L163.78 606.22L163.26 605.81L162.70 605.46L162.12 605.18L161.52 604.94L160.90 604.76L160.27 604.60L159.62 604.47L158.93 604.36L158.17 604.28L157.37 604.25L156.54 604.26L155.69 604.32L154.83 604.39L153.96 604.48L153.09 604.57L152.23 604.66L151.39 604.74L150.56 604.80A0.70 0.70 0 0 0 150.64 606.20L151.48 606.17L152.35 606.12L153.22 606.06L154.09 606.00L154.95 605.95L155.78 605.91L156.58 605.89L157.33 605.90L158.03 605.95L158.67 606.04L159.29 606.16L159.88 606.29L160.43 606.44L160.94 606.60L161.40 606.79L161.83 607.00L162.23 607.26L162.59 607.55L162.94 607.90L163.27 608.33L163.59 608.82L163.88 609.37L164.16 609.98L164.41 610.65L164.63 611.38L164.84 612.16L165.02 613.01L165.19 613.91L165.33 614.88L165.46 615.90L165.56 617.01L165.64 618.20L165.70 619.47L165.74 620.80L165.75 622.18L165.74 623.60L165.70 625.03L165.65 626.47L165.56 627.91L165.45 629.32L165.32 630.74L165.15 632.19L164.96 633.67L164.74 635.16L164.50 636.66L164.24 638.15L163.96 639.62L163.67 641.08L163.35 642.49L163.03 643.86L162.69 645.21L162.32 646.54L161.93 647.85L161.53 649.15L161.10 650.42L160.67 651.67L160.22 652.88L159.76 654.06L159.30 655.19L158.83 656.29L158.36 657.35L157.89 658.41L157.42 659.43L156.94 660.41L156.45 661.34L155.96 662.22L155.45 663.03L154.92 663.77L154.39 664.43L153.84 665.01L153.27 665.49L152.66 665.91L152.02 666.27L151.35 666.58L150.66 666.84L149.94 667.06L149.21 667.25L148.48 667.41L147.74 667.54L147.02 667.66L146.32 667.76L145.64 667.83L144.96 667.88L144.29 667.88L143.62 667.86L142.96 667.80L142.30 667.70L141.64 667.55L140.98 667.37L140.32 667.13L139.64 666.84L138.92 666.49L138.18 666.09L137.44 665.65L136.70 665.16L135.98 664.64L135.28 664.09L134.62 663.51L134.00 662.91L133.44 662.28L132.90 661.64L132.39 660.96L131.91 660.26L131.45 659.53L131.03 658.77L130.64 657.97L130.28 657.14L129.96 656.27L129.67 655.34L129.42 654.37L129.22 653.33L129.05 652.22L128.91 651.03L128.81 649.80L128.75 648.53L128.72 647.23L128.72 645.93L128.75 644.63L128.81 643.34L128.90 642.08L129.01 640.84L129.16 639.58L129.34 638.31L129.56 637.03L129.80 635.76L130.07 634.50L130.37 633.26L130.69 632.04L131.04 630.85L131.40 629.71L131.79 628.57L132.23 627.44L132.69 626.31L133.18 625.20L133.69 624.12L134.22 623.08L134.75 622.09L135.30 621.15L135.84 620.29L136.37 619.52L136.90 618.85L137.44 618.27L137.99 617.75L138.57 617.28L139.17 616.85L139.78 616.43L140.41 616.02L141.05 615.59L141.69 615.13L142.32 614.65A0.55 0.55 0 0 0 141.68 613.75Z"/>
</g></svg>
</body></html>
